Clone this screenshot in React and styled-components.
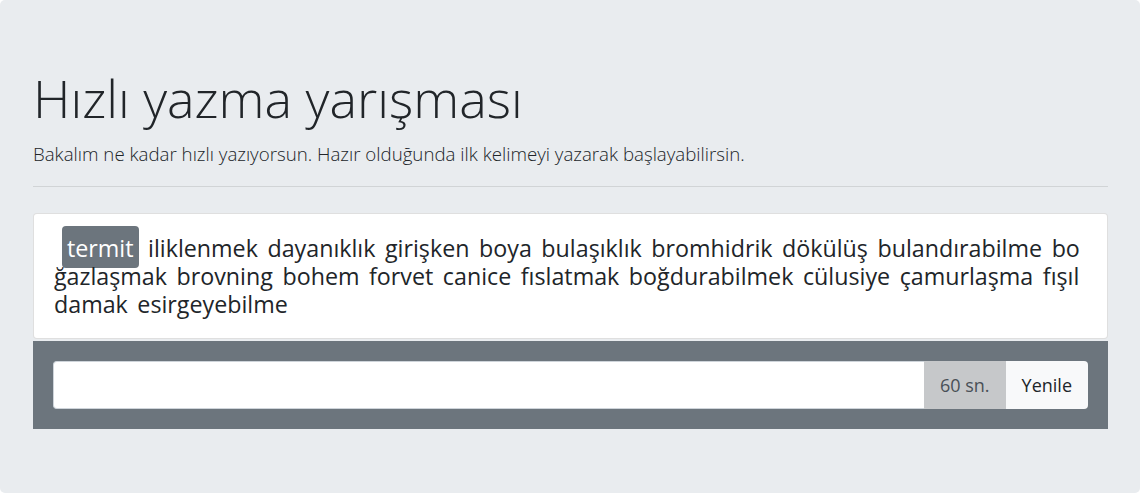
import React, { useState } from "react";
import styled, { createGlobalStyle } from "styled-components";

const GlobalStyle = createGlobalStyle`
  body {
    margin: 0;
    background: #ffffff;
    font-family: "Open Sans", "Noto Sans", sans-serif;
    color: #212529;
  }
`;

const Jumbotron = styled.div`
  background: #e9ecef;
  border-radius: 5px;
  padding: 64px 32px 64px 33px;
  height: 493px;
  box-sizing: border-box;
`;

const Title = styled.h1`
  margin: 0 0 8px;
  font-size: 52px;
  font-weight: 300;
  line-height: 67px;
`;

const Lead = styled.p`
  margin: 0 0 17px;
  font-size: 18.7px;
  font-weight: 300;
  line-height: 30px;
`;

const Divider = styled.hr`
  margin: 0 0 26px;
  border: 0;
  border-top: 1px solid rgba(0, 0, 0, 0.1);
`;

const WordCard = styled.div`
  background: #ffffff;
  border: 1px solid rgba(0, 0, 0, 0.125);
  border-radius: 4px;
  padding: 20px 20px;
  font-size: 23.25px;
  line-height: 28px;
  word-spacing: 3.5px;
  word-break: break-all;
`;

const Word = styled.span`
  ${({ $active }) =>
    $active &&
    `
    background: #6c757d;
    color: #ffffff;
    border-radius: 4px;
    padding: 6px 5px 4px;
    margin-left: 8px;
  `}
`;

const Controls = styled.div`
  margin-top: 2px;
  background: #6c757d;
  padding: 20px;
`;

const InputGroup = styled.div`
  display: flex;
  height: 48px;
`;

const TypingInput = styled.input`
  flex: 1;
  min-width: 0;
  border: 1px solid #ced4da;
  border-right: 0;
  border-radius: 4px 0 0 4px;
  padding: 8px 16px;
  font-family: inherit;
  font-size: 20px;
  background: #ffffff;
  outline: none;
`;

const Timer = styled.span`
  display: flex;
  align-items: center;
  padding: 0 16px;
  background: #c6c8ca;
  color: #495057;
  font-size: 18px;
`;

const RefreshButton = styled.button`
  border: 0;
  border-radius: 0 4px 4px 0;
  padding: 0 16px;
  background: #f8f9fa;
  color: #212529;
  font-family: inherit;
  font-size: 18px;
  cursor: pointer;
`;

const words = [
  "termit", "iliklenmek", "dayanıklık", "girişken", "boya", "bulaşıklık",
  "bromhidrik", "dökülüş", "bulandırabilme", "boğazlaşmak", "brovning",
  "bohem", "forvet", "canice", "fıslatmak", "boğdurabilmek", "cülusiye",
  "çamurlaşma", "fışıl", "damak", "esirgeyebilme",
];

const App = () => {
  const [value, setValue] = useState("");

  return (
    <>
      <GlobalStyle />
      <Jumbotron>
        <Title>Hızlı yazma yarışması</Title>
        <Lead>
          Bakalım ne kadar hızlı yazıyorsun. Hazır olduğunda ilk kelimeyi
          yazarak başlayabilirsin.
        </Lead>
        <Divider />
        <WordCard>
          {words.map((w, i) => (
            <React.Fragment key={w}>
              <Word $active={i === 0}>{w}</Word>{" "}
            </React.Fragment>
          ))}
        </WordCard>
        <Controls>
          <InputGroup>
            <TypingInput
              value={value}
              onChange={(e) => setValue(e.target.value)}
            />
            <Timer>60 sn.</Timer>
            <RefreshButton>Yenile</RefreshButton>
          </InputGroup>
        </Controls>
      </Jumbotron>
    </>
  );
};

export default App;
